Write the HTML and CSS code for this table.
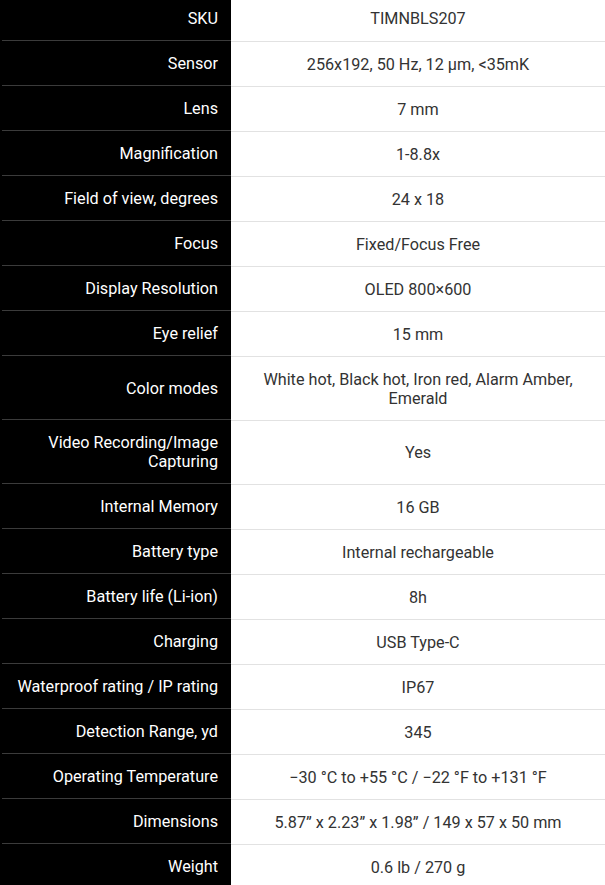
FILE: index.html
```html
<!DOCTYPE html>
<html>
<head>
<meta charset="utf-8">
<link rel="stylesheet" href="styles.css">
</head>
<body>
<table class="specs">
<colgroup><col class="c-label"><col class="c-value"></colgroup>
<tbody>
<tr><th>SKU</th><td>TIMNBLS207</td></tr>
<tr><th>Sensor</th><td>256x192, 50 Hz, 12 μm, &lt;35mK</td></tr>
<tr><th>Lens</th><td>7 mm</td></tr>
<tr><th>Magnification</th><td>1-8.8x</td></tr>
<tr><th>Field of view, degrees</th><td>24 x 18</td></tr>
<tr><th>Focus</th><td>Fixed/Focus Free</td></tr>
<tr><th>Display Resolution</th><td>OLED 800×600</td></tr>
<tr><th>Eye relief</th><td>15 mm</td></tr>
<tr><th>Color modes</th><td>White hot, Black hot, Iron red, Alarm Amber, Emerald</td></tr>
<tr><th>Video Recording/Image Capturing</th><td>Yes</td></tr>
<tr><th>Internal Memory</th><td>16 GB</td></tr>
<tr><th>Battery type</th><td>Internal rechargeable</td></tr>
<tr><th>Battery life (Li-ion)</th><td>8h</td></tr>
<tr><th>Charging</th><td>USB Type-C</td></tr>
<tr><th>Waterproof rating / IP rating</th><td>IP67</td></tr>
<tr><th>Detection Range, yd</th><td>345</td></tr>
<tr><th>Operating Temperature</th><td>−30 °C to +55 °C / −22 °F to +131 °F</td></tr>
<tr><th>Dimensions</th><td>5.87” x 2.23” x 1.98” / 149 x 57 x 50 mm</td></tr>
<tr><th>Weight</th><td>0.6 lb / 270 g</td></tr>
</tbody>
</table>
</body>
</html>
```
FILE: styles.css
```css
html, body {
  margin: 0;
  padding: 0;
  background: #fff;
}
body {
  font-family: Roboto, "Liberation Sans", sans-serif;
  font-size: 16.2px;
  line-height: 19px;
}
.specs {
  width: 605px;
  table-layout: fixed;
  border-collapse: collapse;
  margin-top: -4px;
}
.c-label { width: 231px; }
.c-value { width: 374px; }
.specs th {
  background-color: #000;
  background-image: linear-gradient(#3b3b3b, #3b3b3b);
  background-repeat: no-repeat;
  background-position: 2px 100%;
  background-size: calc(100% - 2px) 1px;
  color: #fff;
  font-weight: 400;
  text-align: right;
  padding: 13px 13px 13px 12px;
  vertical-align: middle;
}
.specs td {
  color: #333;
  text-align: center;
  padding: 13px 16px 12px;
  border-bottom: 1px solid #e2e2e2;
  vertical-align: middle;
}
.specs tr:last-child th { background-image: none; }
```
